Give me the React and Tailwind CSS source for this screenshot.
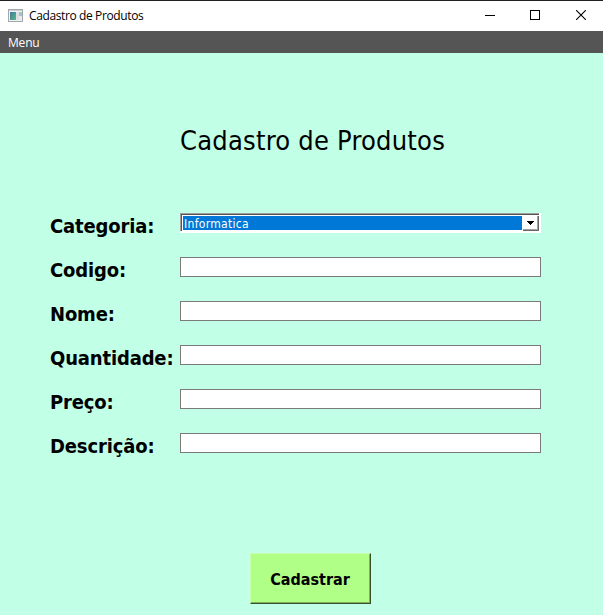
const fields = ["Codigo:", "Nome:", "Quantidade:", "Preço:", "Descrição:"];

function Label({ text }) {
  return (
    <div className="w-[130px] shrink-0 whitespace-nowrap pt-px text-[20px] font-bold leading-[24px] tracking-[-0.15px]">
      {text}
    </div>
  );
}

function TitleBar() {
  return (
    <header className="flex h-[31px] items-center border-t border-[#231f20] bg-white pl-[8px] font-['Open_Sans','Noto_Sans',sans-serif]">
      <svg width="16" height="14" viewBox="0 0 16 14" className="mb-px shrink-0" shapeRendering="crispEdges">
        <defs>
          <linearGradient id="pane" x1="0" y1="0" x2="1" y2="1">
            <stop offset="0" stopColor="#4278a0" />
            <stop offset="1" stopColor="#55b982" />
          </linearGradient>
        </defs>
        <rect width="15" height="13" fill="#a3a8ab" />
        <rect x="1" y="1" width="13" height="11" fill="#f1f2f3" />
        <rect x="1" y="1" width="13" height="1" fill="#c9cdd0" />
        <rect x="2" y="3" width="6" height="8" fill="url(#pane)" />
        <rect x="8" y="3" width="3" height="8" fill="#dddfe2" />
        <rect x="11" y="3" width="3" height="4" fill="#9fc6c4" />
        <rect x="11" y="7" width="3" height="4" fill="#e6e9e8" />
      </svg>
      <span className="ml-[5px] whitespace-nowrap text-[12px] leading-[16px] tracking-[-0.38px]">Cadastro de Produtos</span>
      <div className="mb-[2px] ml-auto flex shrink-0 pr-[17px]">
        <svg width="10" height="10" className="mr-[35px]" shapeRendering="crispEdges"><path d="M0 5.5H10" stroke="#000" /></svg>
        <svg width="10" height="10" className="mr-[36px]" shapeRendering="crispEdges"><rect x=".5" y=".5" width="9" height="9" fill="none" stroke="#000" /></svg>
        <svg width="10" height="10"><path d="M0 0L10 10M10 0L0 10" stroke="#000" strokeWidth="1.1" /></svg>
      </div>
    </header>
  );
}

export default function App() {
  return (
    <div className="flex h-[615px] w-[603px] flex-col overflow-hidden bg-[#c1ffe6] font-['DejaVu_Sans_Condensed','DejaVu_Sans',sans-serif] text-black">
      <TitleBar />
      <nav className="h-[22px] shrink-0 bg-[#555555] pl-[8px] font-['Open_Sans','Noto_Sans',sans-serif] text-[12px] leading-[23px] tracking-[-0.2px] text-white">Menu</nav>
      <main className="flex flex-col">
        <h1 className="ml-[180px] mt-[72px] h-[32px] whitespace-nowrap text-[27px] leading-[32px] tracking-[0.22px]">Cadastro de Produtos</h1>
        <form className="ml-[50px] mt-[56px] flex flex-col gap-[19px]">
          <div className="flex h-[25px]">
            <Label text="Categoria:" />
            <div className="flex h-[20px] w-[361px] border-b-2 border-r-2 border-white bg-white">
              <div className="flex w-full border-l border-t border-[#a0a0a0]">
                <div className="flex w-full border-l border-t border-[#555555] p-px pb-0 pr-0">
                  <div className="h-[14px] flex-1 bg-[#0078d7] pl-[1px] text-[12px] leading-[16px] tracking-[0.3px] text-white">
                    Informatica
                  </div>
                  <div className="ml-px flex h-[15px] w-[16px] border-b border-r border-[#696969]">
                    <div className="flex h-full w-full items-center justify-center border-b border-r border-[#a0a0a0]">
                      <svg width="7" height="4" shapeRendering="crispEdges"><path d="M0 0H7V1H6V2H5V3H4V4H3V3H2V2H1V1H0Z" /></svg>
                    </div>
                  </div>
                </div>
              </div>
            </div>
          </div>
          {fields.map((text) => (
            <div key={text} className="flex h-[25px]">
              <Label text={text} />
              <input aria-label={text} className="h-[20px] w-[361px] border border-[#7a7a7a] bg-white px-1 text-[12px] outline-none" />
            </div>
          ))}
        </form>
        <button className="ml-[250px] mt-[95px] flex h-[51px] w-[121px] border border-b-[#37502b] border-l-[#c9ffae] border-r-[#37502b] border-t-[#c9ffae] bg-[#b0ff87] text-[16px] font-bold leading-[20px]">
          <span className="flex h-full w-full items-center justify-center border-b border-r border-[#7ab15e] pt-[3px]">Cadastrar</span>
        </button>
      </main>
    </div>
  );
}
